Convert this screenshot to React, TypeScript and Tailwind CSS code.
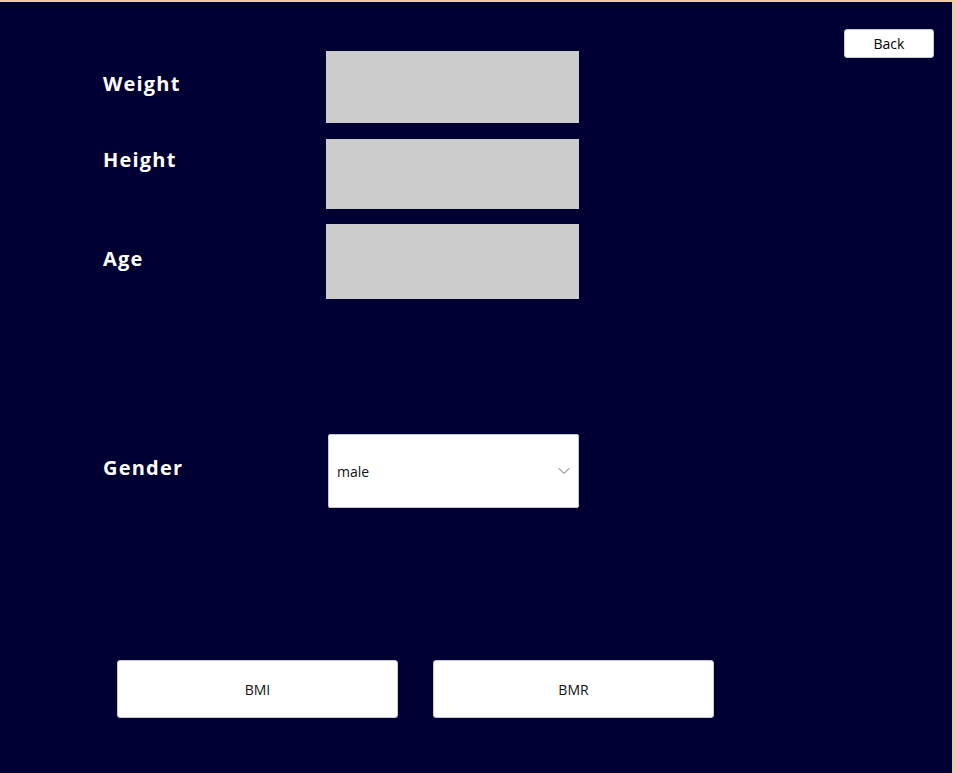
import { ChevronDown } from 'lucide-react'

const labelClass = 'w-[223px] shrink-0 text-[20px] leading-7 font-bold text-white tracking-[1.2px]'

export default function App() {
  return (
    <div className="relative h-[773px] w-[955px] overflow-hidden border-t-2 border-r-[3px] border-[#efcda3] bg-[#000033] font-['Open_Sans',sans-serif]">
      <button className="absolute top-[27px] right-[18px] h-[29px] w-[90px] rounded-[3px] border border-[#c8c8d8] bg-white text-[14px] text-black">
        Back
      </button>

      <div className="flex flex-col pl-[103px] pt-[49px]">
        {/* Weight */}
        <div className="flex">
          <div className={`${labelClass} pt-[19px]`}>Weight</div>
          <div className="h-[72px] w-[253px] bg-[#cccccc]" />
        </div>

        {/* Height */}
        <div className="mt-[16px] flex">
          <div className={`${labelClass} pt-[7px]`}>Height</div>
          <div className="h-[70px] w-[253px] bg-[#cccccc]" />
        </div>

        {/* Age */}
        <div className="mt-[15px] flex">
          <div className={`${labelClass} pt-[21px]`}>Age</div>
          <div className="h-[75px] w-[253px] bg-[#cccccc]" />
        </div>

        {/* Gender */}
        <div className="mt-[135px] flex">
          <div className={`${labelClass} pt-[20px]`}>Gender</div>
          <div className="ml-[2px] flex h-[74px] w-[251px] items-center justify-between rounded-[2px] border border-[#c8c8d0] bg-white pl-[8px] pr-[4px]">
            <span className="text-[14px] text-[#111]">male</span>
            <ChevronDown className="h-5 w-5 text-[#555]" strokeWidth={1.1} />
          </div>
        </div>

        {/* Buttons */}
        <div className="mt-[152px] ml-[14px] flex gap-[35px]">
          <button className="h-[58px] w-[281px] rounded-[3px] border border-[#c8c8d8] bg-white text-[14px] text-[#111]">
            BMI
          </button>
          <button className="h-[58px] w-[281px] rounded-[3px] border border-[#c8c8d8] bg-white text-[14px] text-[#111]">
            BMR
          </button>
        </div>
      </div>
    </div>
  )
}
